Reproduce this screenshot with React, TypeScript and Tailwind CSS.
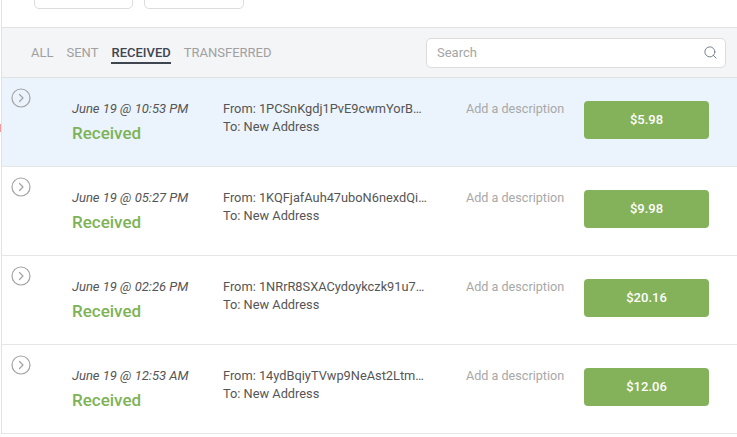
import { Search } from "lucide-react";

const rows = [
  { date: "June 19 @ 10:53 PM", from: "1PCSnKgdj1PvE9cwmYorB…", amount: "$5.98", active: true },
  { date: "June 19 @ 05:27 PM", from: "1KQFjafAuh47uboN6nexdQi…", amount: "$9.98" },
  { date: "June 19 @ 02:26 PM", from: "1NRrR8SXACydoykczk91u7…", amount: "$20.16" },
  { date: "June 19 @ 12:53 AM", from: "14ydBqiyTVwp9NeAst2Ltm…", amount: "$12.06" },
];

const tabs = ["ALL", "SENT", "RECEIVED", "TRANSFERRED"];

function ExpandIcon() {
  return (
    <svg width="20" height="20" viewBox="0 0 20 20" fill="none">
      <circle cx="10" cy="10" r="9" stroke="#a3a3a3" strokeWidth="1.2" />
      <path d="M8.5 6.5 L12 10 L8.5 13.5" stroke="#a3a3a3" strokeWidth="1.2" strokeLinecap="round" strokeLinejoin="round" />
    </svg>
  );
}

export default function App() {
  return (
    <div className="relative h-[437px] w-[737px] overflow-hidden bg-white text-[#555]"
      style={{ fontFamily: "Roboto, 'Liberation Sans', sans-serif" }}>
      {/* stray marker on the left edge */}
      <div className="absolute left-0 top-[124px] h-[8px] w-[1px] bg-[#f29a9a]" />

      <div className="ml-[1px] border-l border-[#e2e2e2]">
        {/* top buttons, cut off */}
        <div className="flex h-[28px] gap-[11px] border-b border-[#e2e2e2] pl-[32px]">
          <div className="-mt-[22px] h-[31px] w-[99px] rounded-[5px] border border-[#dcdcdc] bg-white" />
          <div className="-mt-[22px] h-[31px] w-[100px] rounded-[5px] border border-[#dcdcdc] bg-white" />
        </div>

        {/* filter bar */}
        <div className="flex h-[50px] items-center justify-between border-b border-[#e2e2e2] bg-[#f4f5f7] pl-[29px] pr-[11px]">
          <div className="flex gap-[13px] text-[13px] leading-[15px]">
            {tabs.map((t) => (
              <span key={t}
                className={t === "RECEIVED"
                  ? "border-b-2 border-[#3f4650] pb-[2px] pt-[4px] font-medium text-[#3f4650]"
                  : "pt-[4px] pb-[4px] text-[#a0a0a0]"}>
                {t}
              </span>
            ))}
          </div>
          <div className="flex h-[30px] w-[300px] items-center justify-between rounded-[5px] border border-[#dcdcdc] bg-white pl-[10px] pr-[7px]">
            <span className="text-[13px] text-[#a5a5a5]">Search</span>
            <Search className="size-[15px] text-[#6d7b88]" strokeWidth={1.5} />
          </div>
        </div>

        {/* rows */}
        {rows.map((r) => (
          <div key={r.date}
            className={`flex h-[89px] border-b border-[#e6e6e6] ${r.active ? "bg-[#ebf4fc]" : "bg-white"}`}>
            <div className="w-[70px] pl-[9px] pt-[10px]">
              <ExpandIcon />
            </div>
            <div className="w-[151px] pt-[23px]">
              <div className="text-[13px] italic leading-[15px] text-[#555]">{r.date}</div>
              <div className="mt-[7px] text-[17px] font-medium leading-[20px] text-[#7db356]">Received</div>
            </div>
            <div className="w-[243px] pt-[22px] text-[12.8px] leading-[18px] text-[#555]">
              <div>From: {r.from}</div>
              <div>To: New Address</div>
            </div>
            <div className="w-[118px] pt-[22px] text-[12.6px] leading-[18px] text-[#a8a8a8]">
              Add a description
            </div>
            <div className="pt-[23px]">
              <div className="flex h-[38px] w-[125px] items-center justify-center rounded-[4px] bg-[#84b25a] text-[13px] font-medium text-white">
                {r.amount}
              </div>
            </div>
          </div>
        ))}
      </div>
    </div>
  );
}
